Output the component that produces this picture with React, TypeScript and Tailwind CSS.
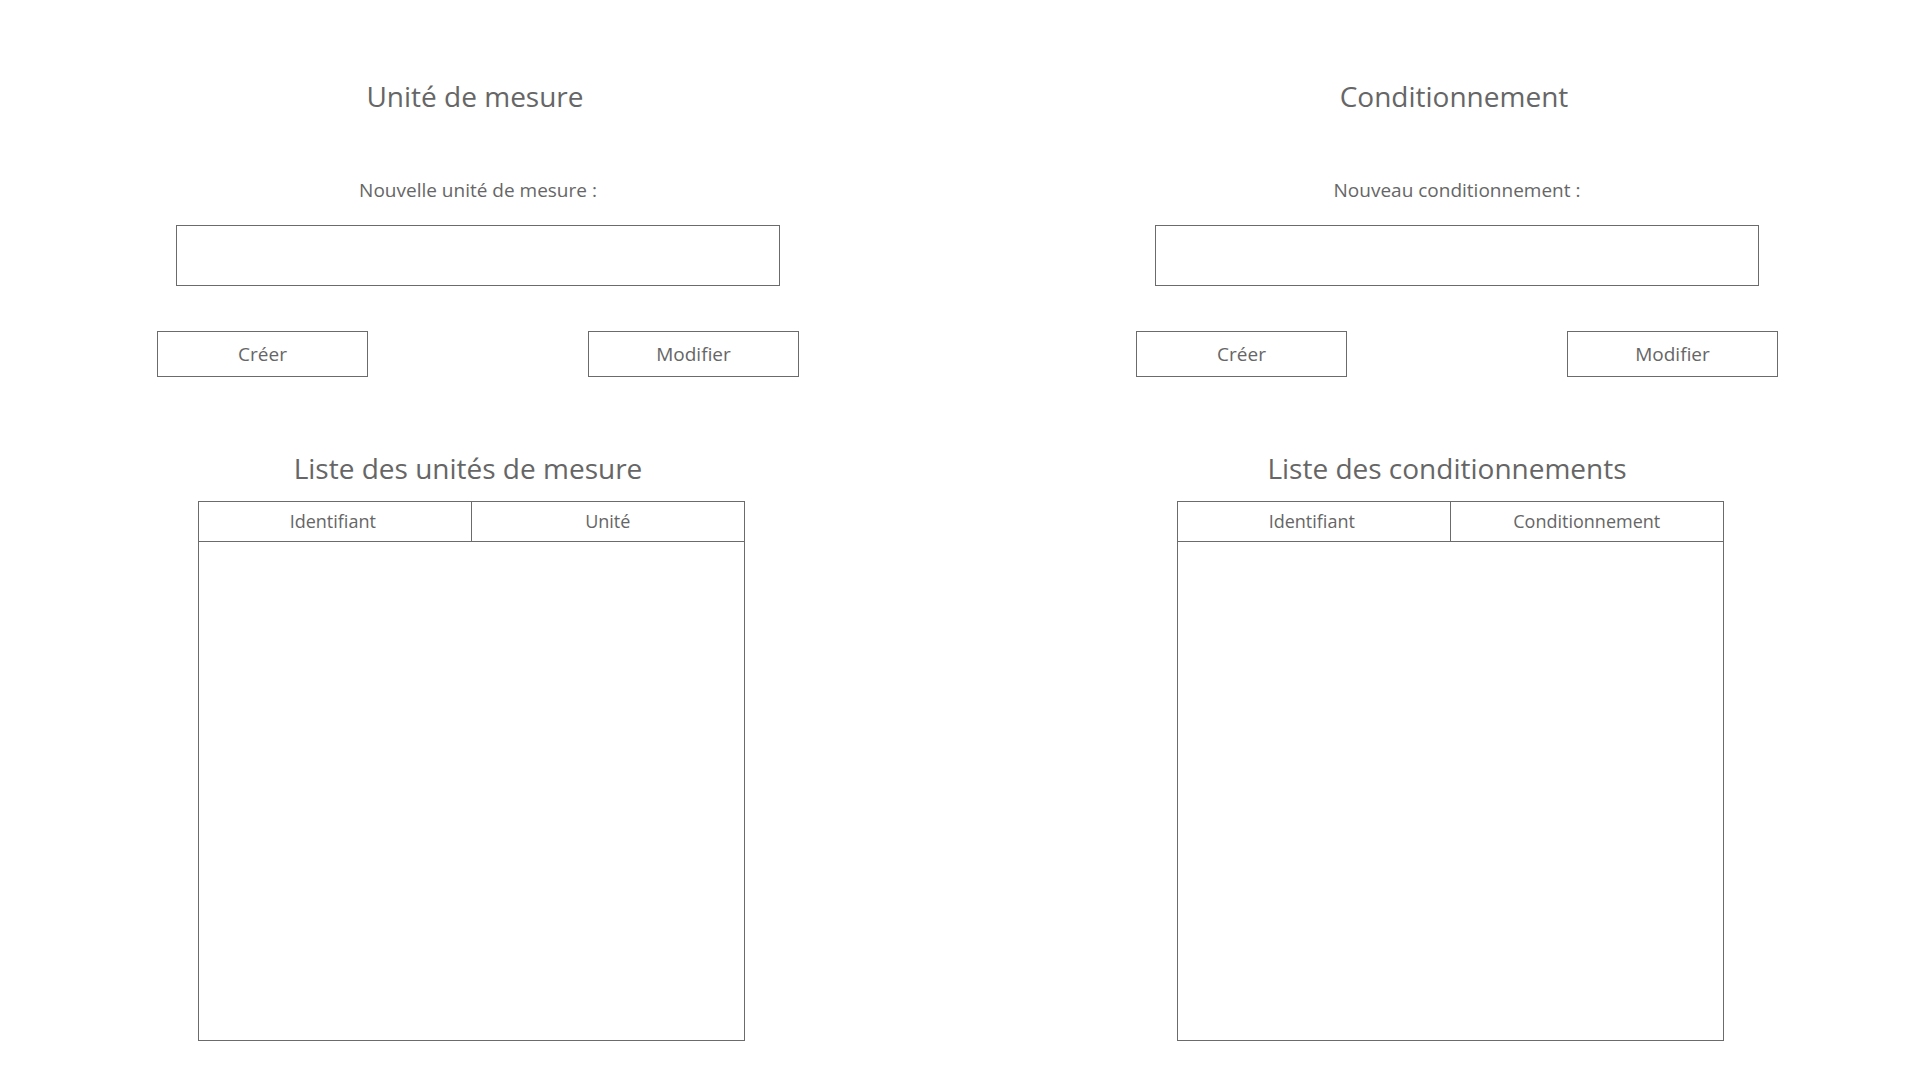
import React from 'react';

type SectionProps = {
    title: string;
    label: string;
    listTitle: string;
    columns: string[];
};

const font = { fontFamily: '"Segoe UI", "Open Sans", "Noto Sans", sans-serif' };

const Section = ({ title, label, listTitle, columns }: SectionProps) => {
    return (
        <div className="w-[700px] flex flex-col text-[#666666]" style={font}>
            <h1 className="text-center text-[28px] leading-[36px] pr-[6px]">{title}</h1>
            <p className="mt-[63px] text-center text-[19px] leading-[26px]">{label}</p>
            <div className="mt-[22px] px-[48px]">
                <input type="text" className="w-full h-[61px] border border-[#6b6b6b] outline-none px-3 text-[18px]" />
            </div>
            <div className="mt-[45px] flex justify-between px-[29px]">
                <button className="w-[211px] h-[46px] border border-[#6b6b6b] bg-white text-[19px] text-[#666666]">Créer</button>
                <button className="w-[211px] h-[46px] border border-[#6b6b6b] bg-white text-[19px] text-[#666666]">Modifier</button>
            </div>
            <h2 className="mt-[71px] text-center text-[28px] leading-[40px] pr-[20px]">{listTitle}</h2>
            <div className="mt-[13px] ml-[70px] w-[547px] h-[540px] border border-[#6b6b6b] flex flex-col">
                <div className="grid grid-cols-2 h-[40px] border-b border-[#6b6b6b]">
                    <div className="flex items-center justify-center text-[18px] border-r border-[#6b6b6b] pr-[4px]">{columns[0]}</div>
                    <div className="flex items-center justify-center text-[18px]">{columns[1]}</div>
                </div>
                <div className="flex-1" />
            </div>
        </div>
    );
};

export default function App() {
    return (
        <div className="w-[1920px] h-[1080px] bg-white flex pl-[128px] pt-[78px] gap-[279px]">
            <Section
                title="Unité de mesure"
                label="Nouvelle unité de mesure :"
                listTitle="Liste des unités de mesure"
                columns={['Identifiant', 'Unité']}
            />
            <Section
                title="Conditionnement"
                label="Nouveau conditionnement :"
                listTitle="Liste des conditionnements"
                columns={['Identifiant', 'Conditionnement']}
            />
        </div>
    );
}
